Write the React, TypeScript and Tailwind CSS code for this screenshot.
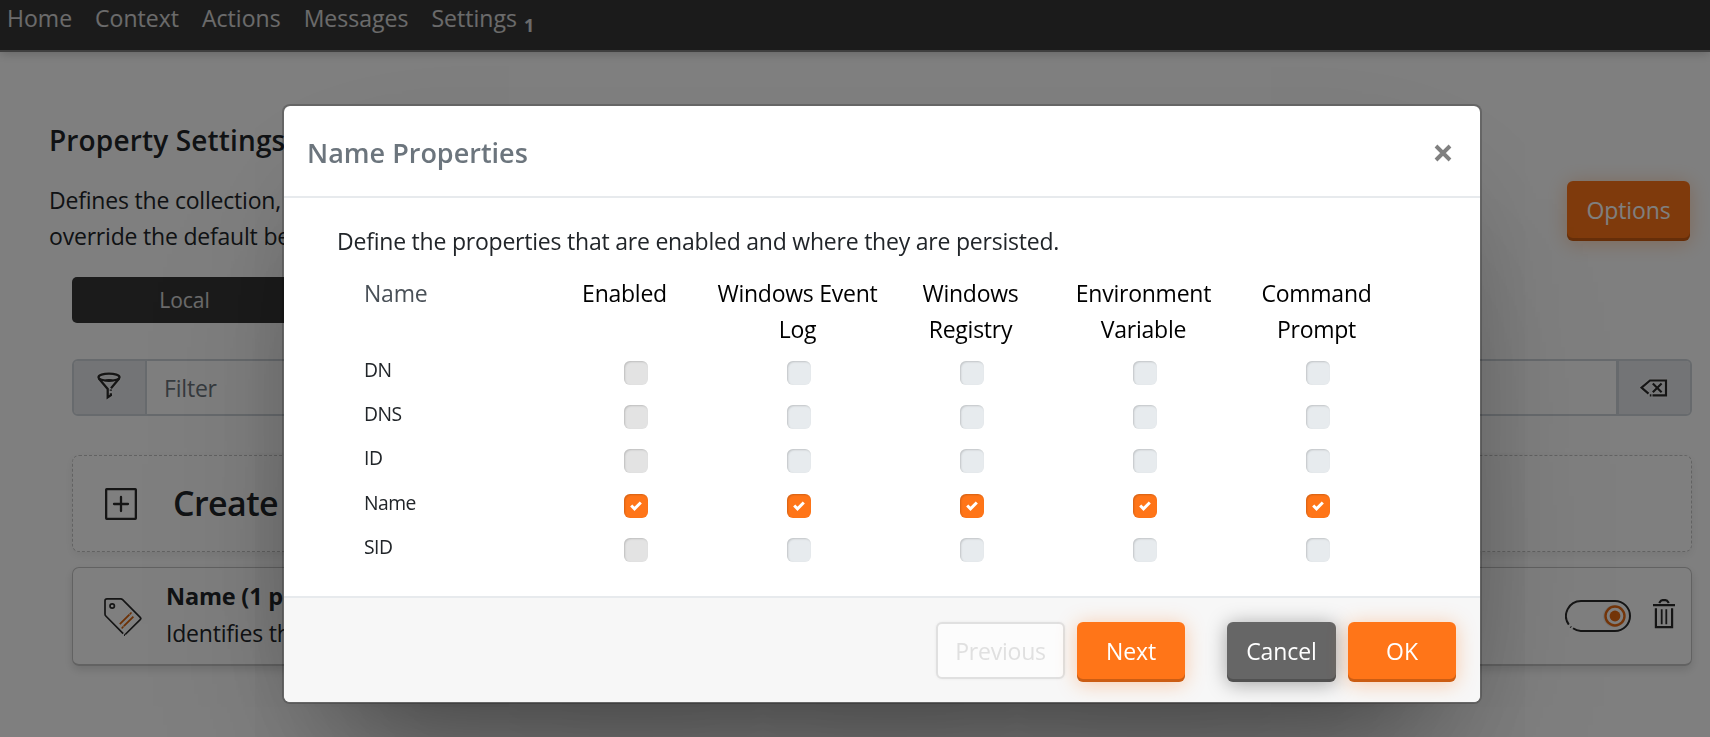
import React from "react";

const navItems = ["Home", "Context", "Actions", "Messages", "Settings"];

const columns = [
  "Enabled",
  "Windows Event Log",
  "Windows Registry",
  "Environment Variable",
  "Command Prompt",
];

const properties = [
  { name: "DN", on: false },
  { name: "DNS", on: false },
  { name: "ID", on: false },
  { name: "Name", on: true },
  { name: "SID", on: false },
];

function FilterIcon() {
  return (
    <svg width="24" height="32" viewBox="0 0 24 32" fill="none" className="drop-shadow-[0_0_1px_#fff]">
      <ellipse cx="12" cy="6.2" rx="10.5" ry="3.6" stroke="#2b2b2b" strokeWidth="2.3" />
      <path d="M1.8 7.5 10.700 18v8.300l3.200-2.100-.1-2M22.200 7.500 14 17.200M13.800 18.500v1.200" stroke="#2b2b2b" strokeWidth="2.300" />
      <path d="M7.500 9.600c2.500-1 6.500-1 9 0z" stroke="#2b2b2b" strokeWidth="1.500" />
    </svg>
  );
}

function BackspaceIcon() {
  return (
    <svg width="28" height="18" viewBox="0 0 28 18" fill="none" className="drop-shadow-[0_0_1px_#fff]">
      <path d="M8.500 14.700 1.500 8.700 10 1.500h16v14.800H12.500M9.800 16.300h1.600" stroke="#2b2b2b" strokeWidth="2.200" />
      <path d="m12.800 4.500 8.800 8.700M21.600 4.500l-8.800 8.700" stroke="#2b2b2b" strokeWidth="2.200" />
    </svg>
  );
}

function PlusSquareIcon() {
  return (
    <svg width="32" height="32" viewBox="0 0 32 32" fill="none" stroke="#2b2b2b" strokeWidth="2.300">
      <rect x="1.150" y="1.150" width="29.700" height="29.700" rx="0.500" />
      <path d="M9 16h14M16 9v14" strokeLinecap="round" />
    </svg>
  );
}

function TagIcon() {
  return (
    <svg width="40" height="40" viewBox="0 0 40 40" fill="none">
      <path
        d="M22.200 37.500 37.200 22.600c.9-.9.9-1.300 0-2.200L19.600 2.600c-.6-.6-1-.8-1.800-.8H4c-1.500 0-2 .5-2 2V17c0 .9.200 1.400.8 2L20.200 36.600M21 38.200h1"
        stroke="#2b2b2b"
        strokeWidth="1.700"
      />
      <circle cx="9.200" cy="9" r="2.200" stroke="#2b2b2b" strokeWidth="1.700" />
      <path d="m16.800 27.200 9.600-9.600M20.800 29.200l9.600-9.600" stroke="#d9600a" strokeWidth="1.800" />
      <path d="m27.200 16.800.8-.8M19.200 30.800l.8-.8" stroke="#d9600a" strokeWidth="1.700" strokeLinecap="round" />
    </svg>
  );
}

function ToggleIcon() {
  return (
    <svg width="66" height="32" viewBox="0 0 66 32" fill="none">
      <path
        d="M8 28.300A15 15 0 0 0 15.800 31H50a15 15 0 0 0 0-30H16A15 15 0 0 0 3.800 24.700M5.400 26.700l.7.700"
        stroke="#2b2b2b"
        strokeWidth="2"
      />
      <circle cx="49" cy="16.200" r="11" fill="#000" fillOpacity="0.080" />
      <circle cx="50" cy="16" r="9.500" stroke="#e86a12" strokeWidth="2.400" fill="#fff" />
      <circle cx="50" cy="16" r="5.400" fill="#e86a12" />
    </svg>
  );
}

function TrashIcon() {
  return (
    <svg width="22" height="30" viewBox="0 0 22 30" fill="none" stroke="#2b2b2b" strokeWidth="2.200" className="mt-[-4px]">
      <path d="M0 6.200h22M6.200 4C7.500 1.900 8.200 1.200 9.500 1.200h3c1.300 0 2 .7 3.300 2.800M2.900 9.200v18.900h16.200V9.200" />
      <path d="M8.700 10.200v15M13.300 10.200v15" strokeWidth="1.800" />
    </svg>
  );
}

function CloseIcon() {
  return (
    <svg width="18" height="18" viewBox="0 0 18 18" stroke="#808080" strokeWidth="3.900" className="mt-[3px]">
      <path d="m2 2 14 14M16 2 2 16" />
    </svg>
  );
}

function Checkbox({ checked, tone }: { checked: boolean; tone: string }) {
  return (
    <span
      className={
        "flex h-6 w-6 items-center justify-center rounded-[6px] shadow-[inset_1px_1px_2px_rgba(0,0,0,0.17)] " +
        (checked ? "bg-[#ff7518]" : tone)
      }
    >
      {checked && (
        <svg width="14" height="12" viewBox="0 0 14 12" fill="none">
          <path d="m2.200 5.500 3.300 3.300 6.300-6.300" stroke="#fff" strokeWidth="3" />
        </svg>
      )}
    </span>
  );
}

const solidButton =
  "flex h-[60px] items-center justify-center rounded-[6px] pb-[2px] text-[23px] leading-9 tracking-[-0.1px] text-white";
const orangeButton =
  " bg-[#ff7518] shadow-[inset_0_-3px_0_rgba(0,0,0,0.2),0_2px_20px_rgba(255,117,24,0.35)]";

export default function App() {
  return (
    <div className="h-[737px] overflow-hidden bg-white font-['Open_Sans',sans-serif] text-[23px] leading-9 tracking-[-0.2px] text-[#212529]">
      <nav className="flex h-[52px] gap-[23px] border-b-2 border-[#7e7e7e] bg-[#363636] pl-[7px] tracking-[0.020px] text-white/80 shadow-[0_2px_10px_rgba(0,0,0,0.2)]">
        {navItems.map((item) => (
          <a key={item}>{item}</a>
        ))}
        <span className="ml-[-16px] pt-[7px] text-[18px] font-bold">1</span>
      </nav>

      <main className="pl-[49px] pr-[18px] pt-[71px]">
        <header className="flex justify-between">
          <div>
            <h1 className="text-[28px] font-semibold leading-[34px] tracking-[0.150px]">Property Settings</h1>
            <p className="mt-[25px]">
              Defines the collection,
              <br />
              override the default behavior.
            </p>
          </div>
          <button className={solidButton + orangeButton + " mr-[2px] mt-[58px] w-[123px]"}>Options</button>
        </header>

        <div className="ml-[23px] mt-[23px] flex h-[46px] w-[225px] items-center justify-center rounded-[5px] bg-[#363636] text-[21px] tracking-normal text-white/80">
          Local
        </div>

        <div className="ml-[23px] mt-[36px] flex h-[57px] overflow-hidden rounded-[6px] border-2 border-[#ced4da]">
          <div className="flex w-[73px] items-center justify-center border-r-2 border-[#ced4da] bg-[#e7e9ec] pb-[1px] pr-[2px]">
            <FilterIcon />
          </div>
          <div className="flex flex-1 items-center pl-[17px] pt-[1px] text-[#6c757d]">Filter</div>
          <div className="flex w-[74px] items-center justify-center border-l-[3px] border-[#ced4da] bg-[#e7e9ec] pr-[1px]">
            <BackspaceIcon />
          </div>
        </div>

        <section className="ml-[23px] mt-[39px] flex h-[97px] items-center rounded-[7px] border border-dashed border-[#c4c4c4] pl-[32px] shadow-[0_3px_10px_rgba(0,0,0,0.07)]">
          <PlusSquareIcon />
          <h2 className="ml-[36px] mt-[-2px] text-[34px] font-semibold leading-[48px] tracking-[-0.600px]">Create</h2>
        </section>

        <section className="ml-[23px] mt-[15px] flex h-[99px] items-center rounded-[7px] border border-b-2 border-[#c4c4c4] pl-[30px] pr-[16px] shadow-[0_4px_10px_rgba(0,0,0,0.13)]">
          <div className="mt-[2px]">
            <TagIcon />
          </div>
          <div className="ml-[23px] mt-[-5px]">
            <h3 className="text-[23.500px] font-bold leading-[38px]">Name (1 property)</h3>
            <p>Identifies the name.</p>
          </div>
          <div className="ml-auto flex items-center gap-[22px]">
            <ToggleIcon />
            <TrashIcon />
          </div>
        </section>
      </main>

      <div className="fixed inset-0 flex items-start bg-black/50 pl-[282px] pt-[104px]">
        <div
          role="dialog"
          className="h-[600px] w-[1200px] rounded-[8px] border-2 border-black/20 bg-white bg-clip-padding shadow-[0_100px_200px_-40px_rgba(0,0,0,0.25),0_60px_120px_-60px_rgba(0,0,0,0.5)]"
        >
          <header className="flex h-[92px] items-center justify-between border-b-2 border-[#e7eaed] pl-[23px] pr-[28px]">
            <h2 className="mt-[3px] text-[27px] font-semibold tracking-normal text-[#6c757d]">Name Properties</h2>
            <CloseIcon />
          </header>

          <div className="h-[398px] pl-[53px] pt-[25px]">
            <p className="tracking-[-0.220px]">Define the properties that are enabled and where they are persisted.</p>

            <div className="ml-[27px] mt-[16px] grid grid-cols-[174px_repeat(5,173px)]">
              <div className="text-[#495057]">Name</div>
              {columns.map((label) => (
                <div key={label} className="px-[2px] text-center tracking-[-0.250px] text-black">
                  {label}
                </div>
              ))}
            </div>

            <div className="ml-[27px] mt-[7px]">
              {properties.map((p) => (
                <div key={p.name} className="grid h-[44.250px] grid-cols-[174px_repeat(5,173px)]">
                  <div className="pt-[0.750px] text-[19.300px] leading-[30px] tracking-[-0.500px]">{p.name}</div>
                  {columns.map((label, i) => (
                    <div key={label} className={"flex items-start justify-center pt-[6.750px] " + (i === 0 ? "pl-[23px]" : "pl-[3px]")}>
                      <Checkbox checked={p.on} tone={i === 0 ? "bg-[#e3e3e3]" : "bg-[#e7ebee]"} />
                    </div>
                  ))}
                </div>
              ))}
            </div>
          </div>

          <footer className="flex h-[106px] justify-end rounded-b-[6px] border-t-2 border-[#e7eaed] bg-[#f7f7f7] pr-[24px] pt-[24px]">
            <button className="flex h-[57px] w-[129px] items-center justify-center rounded-[6px] border-2 border-[#e0e0e0] bg-[#fcfcfc] text-[#e0e0e0] shadow-[0_0_3px_rgba(0,0,0,0.06)]">
              Previous
            </button>
            <button className={solidButton + orangeButton + " ml-[12px] w-[108px]"}>Next</button>
            <button
              className={
                solidButton +
                " ml-[42px] w-[109px] bg-[#666] shadow-[inset_0_-3px_0_rgba(0,0,0,0.2),0_2px_20px_rgba(0,0,0,0.35)]"
              }
            >
              Cancel
            </button>
            <button className={solidButton + orangeButton + " ml-[12px] w-[108px]"}>OK</button>
          </footer>
        </div>
      </div>
    </div>
  );
}
